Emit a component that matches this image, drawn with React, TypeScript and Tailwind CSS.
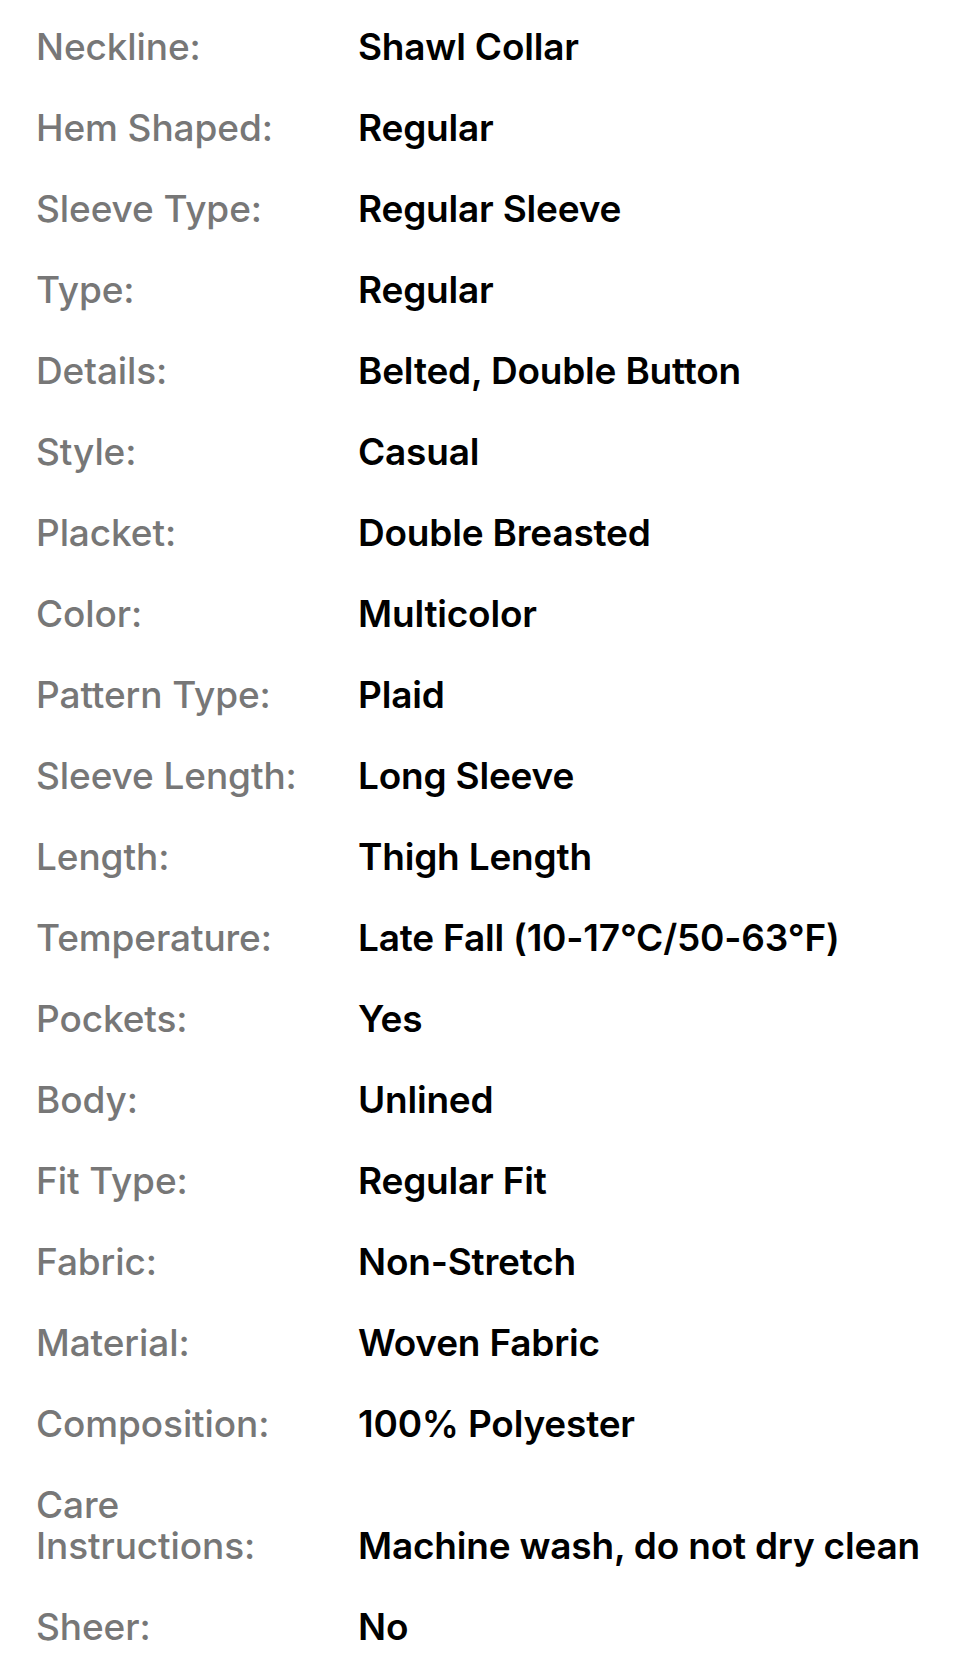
import React from "react";

const rows: [string, string][] = [
  ["Neckline:", "Shawl Collar"],
  ["Hem Shaped:", "Regular"],
  ["Sleeve Type:", "Regular Sleeve"],
  ["Type:", "Regular"],
  ["Details:", "Belted, Double Button"],
  ["Style:", "Casual"],
  ["Placket:", "Double Breasted"],
  ["Color:", "Multicolor"],
  ["Pattern Type:", "Plaid"],
  ["Sleeve Length:", "Long Sleeve"],
  ["Length:", "Thigh Length"],
  ["Temperature:", "Late Fall (10-17°C/50-63°F)"],
  ["Pockets:", "Yes"],
  ["Body:", "Unlined"],
  ["Fit Type:", "Regular Fit"],
  ["Fabric:", "Non-Stretch"],
  ["Material:", "Woven Fabric"],
  ["Composition:", "100% Polyester"],
  ["Care Instructions:", "Machine wash, do not dry clean"],
  ["Sheer:", "No"],
];

export default function App() {
  return (
    <div className="w-[962px] h-[1659px] overflow-hidden bg-white pl-[36px] pt-[26px] font-['Inter',sans-serif] text-[37px] leading-[41px]">
      <div className="flex flex-col gap-[40px]">
        {rows.map(([label, value]) => (
          <div key={label} className="flex items-end">
            <div className="w-[322px] shrink-0 pr-[32px] font-medium text-[#777777] tracking-[-0.1px]">{label}</div>
            <div className="font-semibold text-black whitespace-nowrap tracking-[-0.2px]">{value}</div>
          </div>
        ))}
      </div>
    </div>
  );
}
